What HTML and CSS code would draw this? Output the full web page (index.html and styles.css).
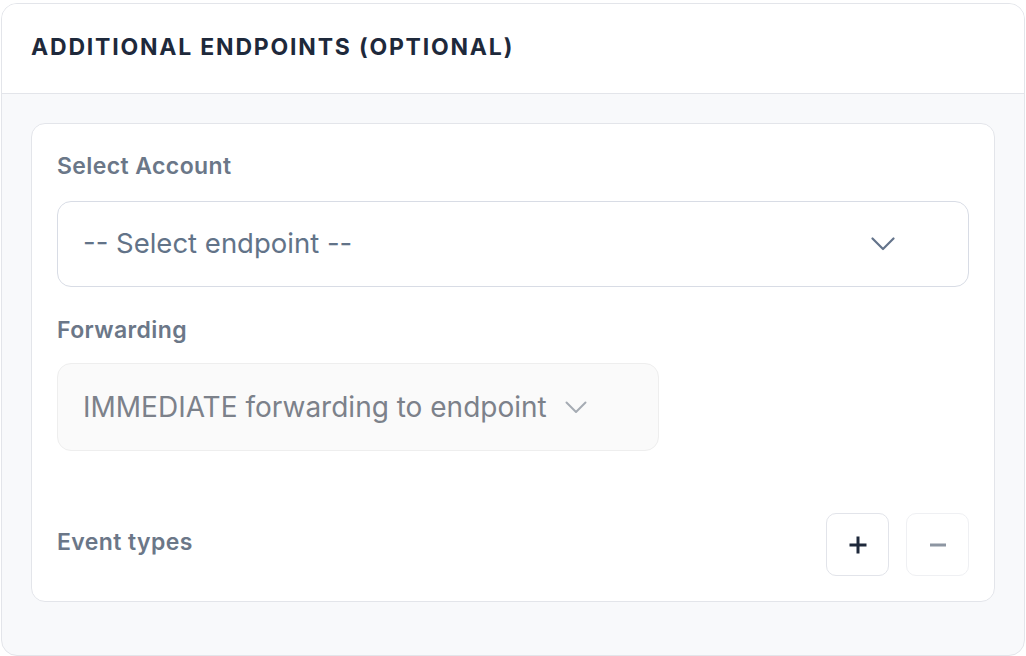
FILE: index.html
```html
<!DOCTYPE html>
<html>
<head>
<meta charset="utf-8">
<link rel="stylesheet" href="styles.css">
</head>
<body>
<div class="page">
  <section class="panel">
    <header class="panel-head">
      <h2 class="panel-title">Additional Endpoints (Optional)</h2>
    </header>
    <div class="panel-body">
      <div class="card">
        <label class="field-label">Select Account</label>
        <div class="select select-wide">
          <span class="select-text">-- Select endpoint --</span>
          <svg class="chev" width="24" height="14" viewBox="0 0 24 14"><path d="M1.5 1.5 L12 12 L22.5 1.5" fill="none" stroke="currentColor" stroke-width="2.2" stroke-linecap="round" stroke-linejoin="round"/></svg>
        </div>
        <label class="field-label field-label-2">Forwarding</label>
        <div class="select select-disabled">
          <span class="select-text">IMMEDIATE forwarding to endpoint</span>
          <svg class="chev" width="22" height="13" viewBox="0 0 22 13"><path d="M1.5 1.5 L11 11 L20.5 1.5" fill="none" stroke="currentColor" stroke-width="2" stroke-linecap="round" stroke-linejoin="round"/></svg>
        </div>
        <div class="events-row">
          <span class="field-label events-label">Event types</span>
          <div class="btns">
            <button class="icon-btn">
              <svg width="20" height="20" viewBox="0 0 20 20"><path d="M10 1.5 V18.5 M1.5 10 H18.5" stroke="currentColor" stroke-width="3" stroke-linecap="butt"/></svg>
            </button>
            <button class="icon-btn icon-btn-disabled">
              <svg width="20" height="20" viewBox="0 0 20 20"><path d="M2 10 H18" stroke="currentColor" stroke-width="3"/></svg>
            </button>
          </div>
        </div>
      </div>
    </div>
  </section>
</div>
</body>
</html>
```

FILE: styles.css
```css
* { box-sizing: border-box; }
html, body { margin: 0; padding: 0; background: #ffffff; }
body { font-family: Inter, "Noto Sans", sans-serif; }

.page { padding: 3px 1px 1px 1px; }

.panel {
  border: 1px solid #e3e5ea;
  border-radius: 16px;
  overflow: hidden;
  background: #f8f9fb;
}

.panel-head {
  background: #ffffff;
  height: 90px;
  border-bottom: 1px solid #e3e5ea;
  display: flex;
  align-items: center;
  padding: 0 29px;
}

.panel-title {
  margin: 0;
  font-size: 23px;
  font-weight: 700;
  text-transform: uppercase;
  letter-spacing: 1.8px;
  color: #1e293b;
  line-height: 1;
  padding-bottom: 2px;
}

.panel-body { padding: 29px 29px 53px 29px; }

.card {
  background: #ffffff;
  border: 1px solid #e3e5ea;
  border-radius: 14px;
  padding: 28px 25px 25px 25px;
  display: flex;
  flex-direction: column;
  align-items: flex-start;
}

.field-label {
  display: block;
  font-size: 23px;
  font-weight: 600;
  letter-spacing: 0.4px;
  color: #6b7788;
  line-height: 28px;
  margin-bottom: 21px;
}
.field-label-2 { margin-top: 29px; margin-bottom: 19px; }

.select {
  display: flex;
  align-items: center;
  border: 1.5px solid #d8dce5;
  border-radius: 14px;
  height: 86px;
  padding: 0 24px 0 25px;
  font-size: 27.5px;
  color: #627388;
}
.select-wide { width: 100%; justify-content: space-between; padding-right: 73px; }
.select-text { line-height: 1; }
.chev { color: #64748b; display: block; }

.select-disabled {
  background: #fafafa;
  border: 1.5px solid #eeeeee;
  height: 88px;
  width: 602px;
  font-size: 28px;
  color: #7c818a;
  gap: 18px;
  padding-right: 0;
}
.select-disabled .chev { color: #a5abb3; }

.events-row {
  margin-top: 62px;
  width: 100%;
  display: flex;
  align-items: center;
  justify-content: space-between;
}
.events-label { margin: 0; position: relative; top: -3px; }

.btns { display: flex; gap: 17px; }

.icon-btn {
  width: 63px;
  height: 63px;
  border: 1.5px solid #e2e4ea;
  border-radius: 10px;
  background: #ffffff;
  color: #1e293b;
  display: flex;
  align-items: center;
  justify-content: center;
  padding: 0;
}
.icon-btn svg { display: block; }
.icon-btn-disabled { border-color: #eff0f3; color: #8d96a2; }
```
